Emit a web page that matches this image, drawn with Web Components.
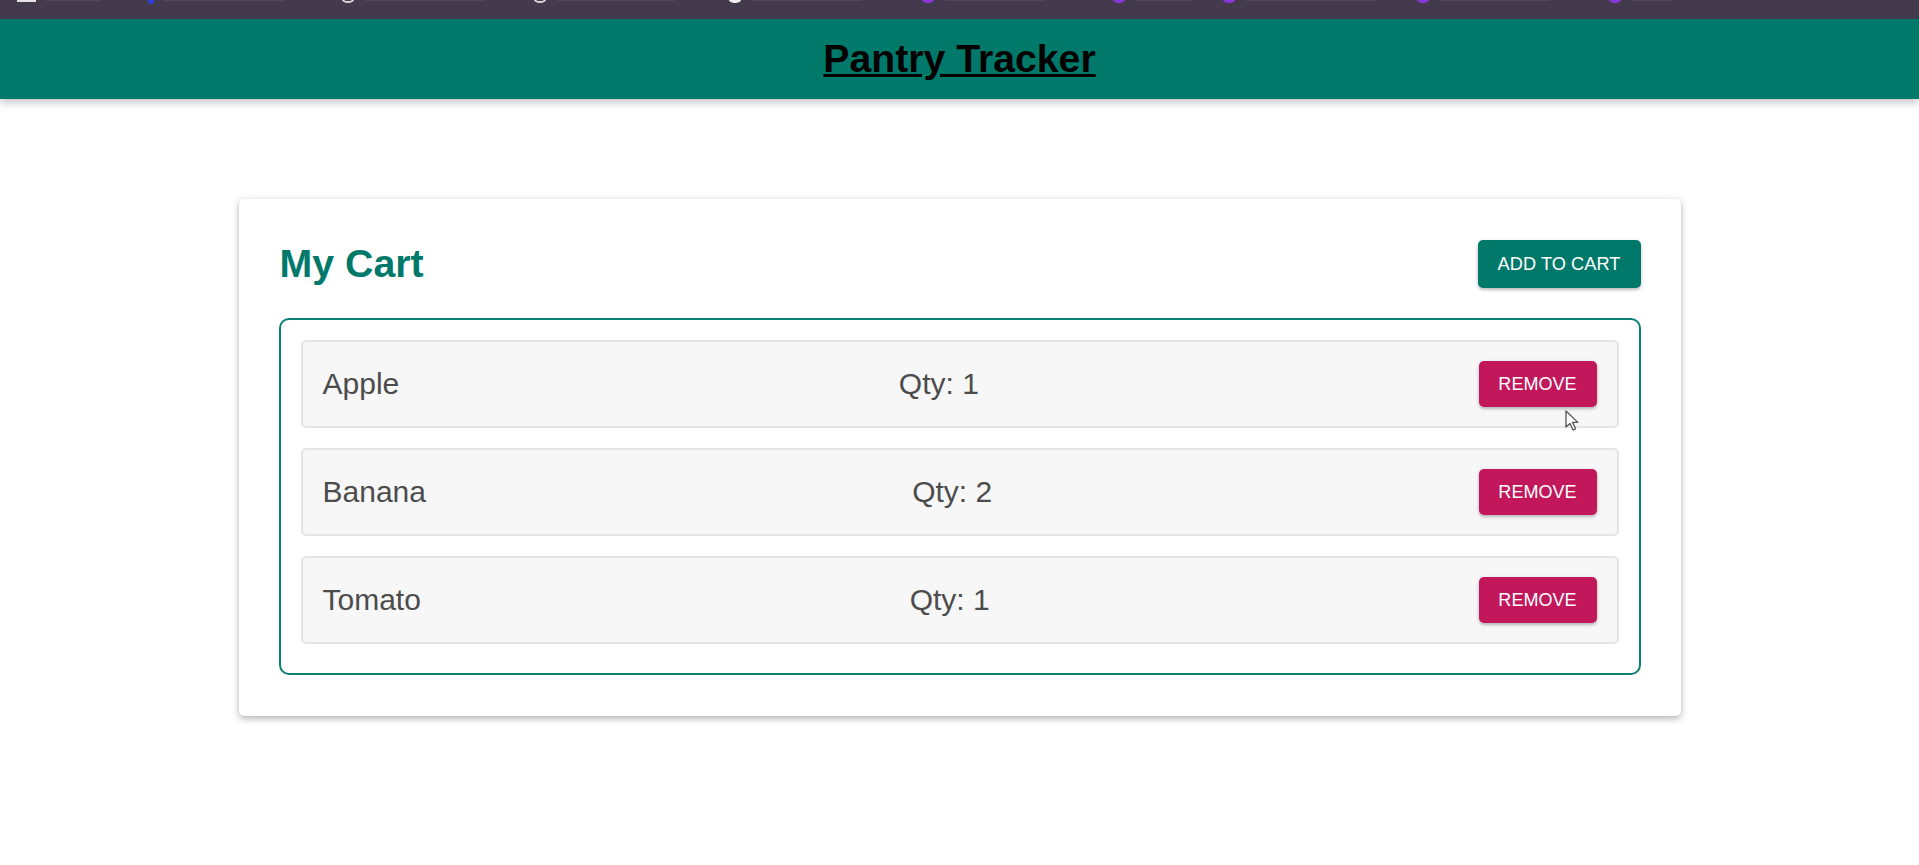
<!DOCTYPE html>
<html lang="en">
	<head>
		<meta charset="UTF-8" />
		<meta name="viewport" content="width=device-width" />
		<title>Pantry Tracker</title>
		<style>
			html,
			body {
				margin: 0;
				background: #fff;
				font-family: "Liberation Sans", Arial, sans-serif;
			}
			body {
				position: relative;
				height: 865px;
				overflow: hidden;
			}
		</style>
	</head>
	<body>
		<bookmark-bar>
			<bookmark-mark kind="menu" pitch="138" label="54"></bookmark-mark>
			<bookmark-mark kind="blue" pitch="193" label="120"></bookmark-mark>
			<bookmark-mark kind="ring" pitch="192" label="120"></bookmark-mark>
			<bookmark-mark kind="ring" pitch="195" label="118"></bookmark-mark>
			<bookmark-mark kind="white" pitch="193" label="110"></bookmark-mark>
			<bookmark-mark kind="purple" pitch="191" label="100"></bookmark-mark>
			<bookmark-mark kind="purple" pitch="110" label="56"></bookmark-mark>
			<bookmark-mark kind="purple" pitch="194" label="130"></bookmark-mark>
			<bookmark-mark kind="purple" pitch="192" label="110"></bookmark-mark>
			<bookmark-mark kind="purple" pitch="120" label="40"></bookmark-mark>
		</bookmark-bar>
		<app-header>Pantry Tracker</app-header>

		<cart-panel heading="My Cart">
			<cart-row name="Apple" qty="1"></cart-row>
			<cart-row name="Banana" qty="2"></cart-row>
			<cart-row name="Tomato" qty="1"></cart-row>
		</cart-panel>

		<mouse-pointer></mouse-pointer>

		<template id="button-tpl">
			<style>
				:host {
					display: inline-block;
				}
				button {
					display: block;
					height: var(--h, 48px);
					width: var(--w, auto);
					padding: 0;
					border: 0;
					border-radius: 5px;
					background: var(--bg, #00796b);
					color: #fff;
					font: 400 var(--fs, 18.2px) "Liberation Sans", Arial, sans-serif;
					letter-spacing: 0.05px;
					text-transform: uppercase;
					cursor: pointer;
					box-shadow: 0 2px 3px rgba(0, 0, 0, 0.2), 0 1px 5px rgba(0, 0, 0, 0.1);
				}
			</style>
			<button><slot></slot></button>
		</template>

		<script>
			function tpl(id) {
				return document.getElementById(id).content.cloneNode(true);
			}

			customElements.define(
				"bookmark-bar",
				class extends HTMLElement {
					constructor() {
						super();
						this.attachShadow({ mode: "open" });
						this.shadowRoot.innerHTML = `
						<style>
							:host {
								display: flex;
								height: 19px;
								padding-left: 17px;
								background: #433a4e;
								overflow: hidden;
							}
						</style>
						<slot></slot>
					`;
					}
				}
			);

			// only the bottom edge of each bookmark shows above the app header
			customElements.define(
				"bookmark-mark",
				class extends HTMLElement {
					constructor() {
						super();
						const kind = this.getAttribute("kind");
						const pitch = this.getAttribute("pitch");
						const label = this.getAttribute("label");
						this.attachShadow({ mode: "open" });
						this.shadowRoot.innerHTML = `
						<style>
							:host {
								display: flex;
								flex: 0 0 ${pitch}px;
								gap: 10px;
								height: 3px;
								align-items: flex-start;
							}
							.icon {
								flex: none;
								width: 14px;
								height: 6px;
								margin-top: -3px;
								border-radius: 0 0 7px 7px;
								margin-left: -7px;
							}
							.menu {
								width: 19px;
								height: 2px;
								margin: 0;
								border-radius: 0;
								background: #e4e2e8;
							}
							.blue {
								width: 6px;
								height: 4px;
								margin-top: 0;
								background: #2f3fe0;
							}
							.ring {
								box-sizing: border-box;
								border: 2px solid #d4d2d8;
							}
							.white {
								background: #f2f0f2;
							}
							.purple {
								background: #8a35d8;
							}
							.text {
								width: ${label}px;
								height: 1px;
								background: #8a8490;
								opacity: 0.2;
							}
						</style>
						<div class="icon ${kind}"></div>
						<div class="text"></div>
					`;
					}
				}
			);

			customElements.define(
				"app-header",
				class extends HTMLElement {
					constructor() {
						super();
						this.attachShadow({ mode: "open" });
						this.shadowRoot.innerHTML = `
						<style>
							:host {
								display: flex;
								position: relative;
								height: 80px;
								align-items: center;
								justify-content: center;
								background: #00796b;
								box-shadow: 0 4px 8px rgba(0, 0, 0, 0.22);
							}
							h1 {
								margin: 0;
								font: 700 39.2px/1 "Liberation Sans", Arial, sans-serif;
								color: #000;
								text-decoration: underline;
							}
						</style>
						<h1><slot></slot></h1>
					`;
					}
				}
			);

			customElements.define(
				"app-button",
				class extends HTMLElement {
					constructor() {
						super();
						this.attachShadow({ mode: "open" }).appendChild(tpl("button-tpl"));
					}
				}
			);

			customElements.define(
				"cart-panel",
				class extends HTMLElement {
					constructor() {
						super();
						this.attachShadow({ mode: "open" });
						this.shadowRoot.innerHTML = `
						<style>
							:host {
								display: block;
								box-sizing: border-box;
								width: 1442px;
								margin: 100px auto 0;
								padding: 41px 40px;
								background: #fff;
								border-radius: 5px;
								box-shadow: 0 3px 7px rgba(0, 0, 0, 0.26), 0 0 5px rgba(0, 0, 0, 0.07);
							}
							.top {
								display: flex;
								justify-content: space-between;
								align-items: center;
								margin-bottom: 30px;
							}
							h2 {
								margin: -1px 0 0 1px;
								font: 700 39.3px/1 "Liberation Sans", Arial, sans-serif;
								color: #00796b;
							}
							.list {
								display: flex;
								flex-direction: column;
								gap: 20px;
								padding: 20px 20px 29px;
								border: 2px solid #0b7f71;
								border-radius: 10px;
							}
							app-button {
								--w: 163px;
								--h: 48px;
							}
						</style>
						<div class="top">
							<h2>${this.getAttribute("heading")}</h2>
							<app-button>Add to cart</app-button>
						</div>
						<div class="list"><slot></slot></div>
					`;
					}
				}
			);

			customElements.define(
				"cart-row",
				class extends HTMLElement {
					constructor() {
						super();
						this.attachShadow({ mode: "open" });
						this.shadowRoot.innerHTML = `
						<style>
							:host {
								display: flex;
								box-sizing: border-box;
								height: 88px;
								padding: 0 20px;
								align-items: center;
								background: #f7f7f7;
								border: 2px solid #e5e5e5;
								border-radius: 5px;
								font-size: 30px;
								color: #4c4c4c;
							}
							.info {
								display: flex;
								flex: 1;
								justify-content: space-between;
							}
							app-button {
								flex: none;
								--bg: #c2185b;
								--w: 118px;
								--h: 46px;
								--fs: 18px;
							}
						</style>
						<div class="info">
							<span>${this.getAttribute("name")}</span>
							<span>Qty: ${this.getAttribute("qty")}</span>
							<span></span>
						</div>
						<app-button>Remove</app-button>
					`;
					}
				}
			);

			customElements.define(
				"mouse-pointer",
				class extends HTMLElement {
					constructor() {
						super();
						this.attachShadow({ mode: "open" });
						this.shadowRoot.innerHTML = `
						<style>
							:host {
								position: absolute;
								left: 1565px;
								top: 410px;
								width: 14px;
								height: 22px;
								pointer-events: none;
							}
							svg {
								display: block;
							}
						</style>
						<svg width="14" height="22" viewBox="0 0 14 22">
							<path d="M1 1v16l4-3.6 3 6.6 2.6-1.2-3-6.4h5.2z" fill="#fff" stroke="#555" stroke-width="1.3" stroke-linejoin="round" />
						</svg>
					`;
					}
				}
			);
		</script>
	</body>
</html>
